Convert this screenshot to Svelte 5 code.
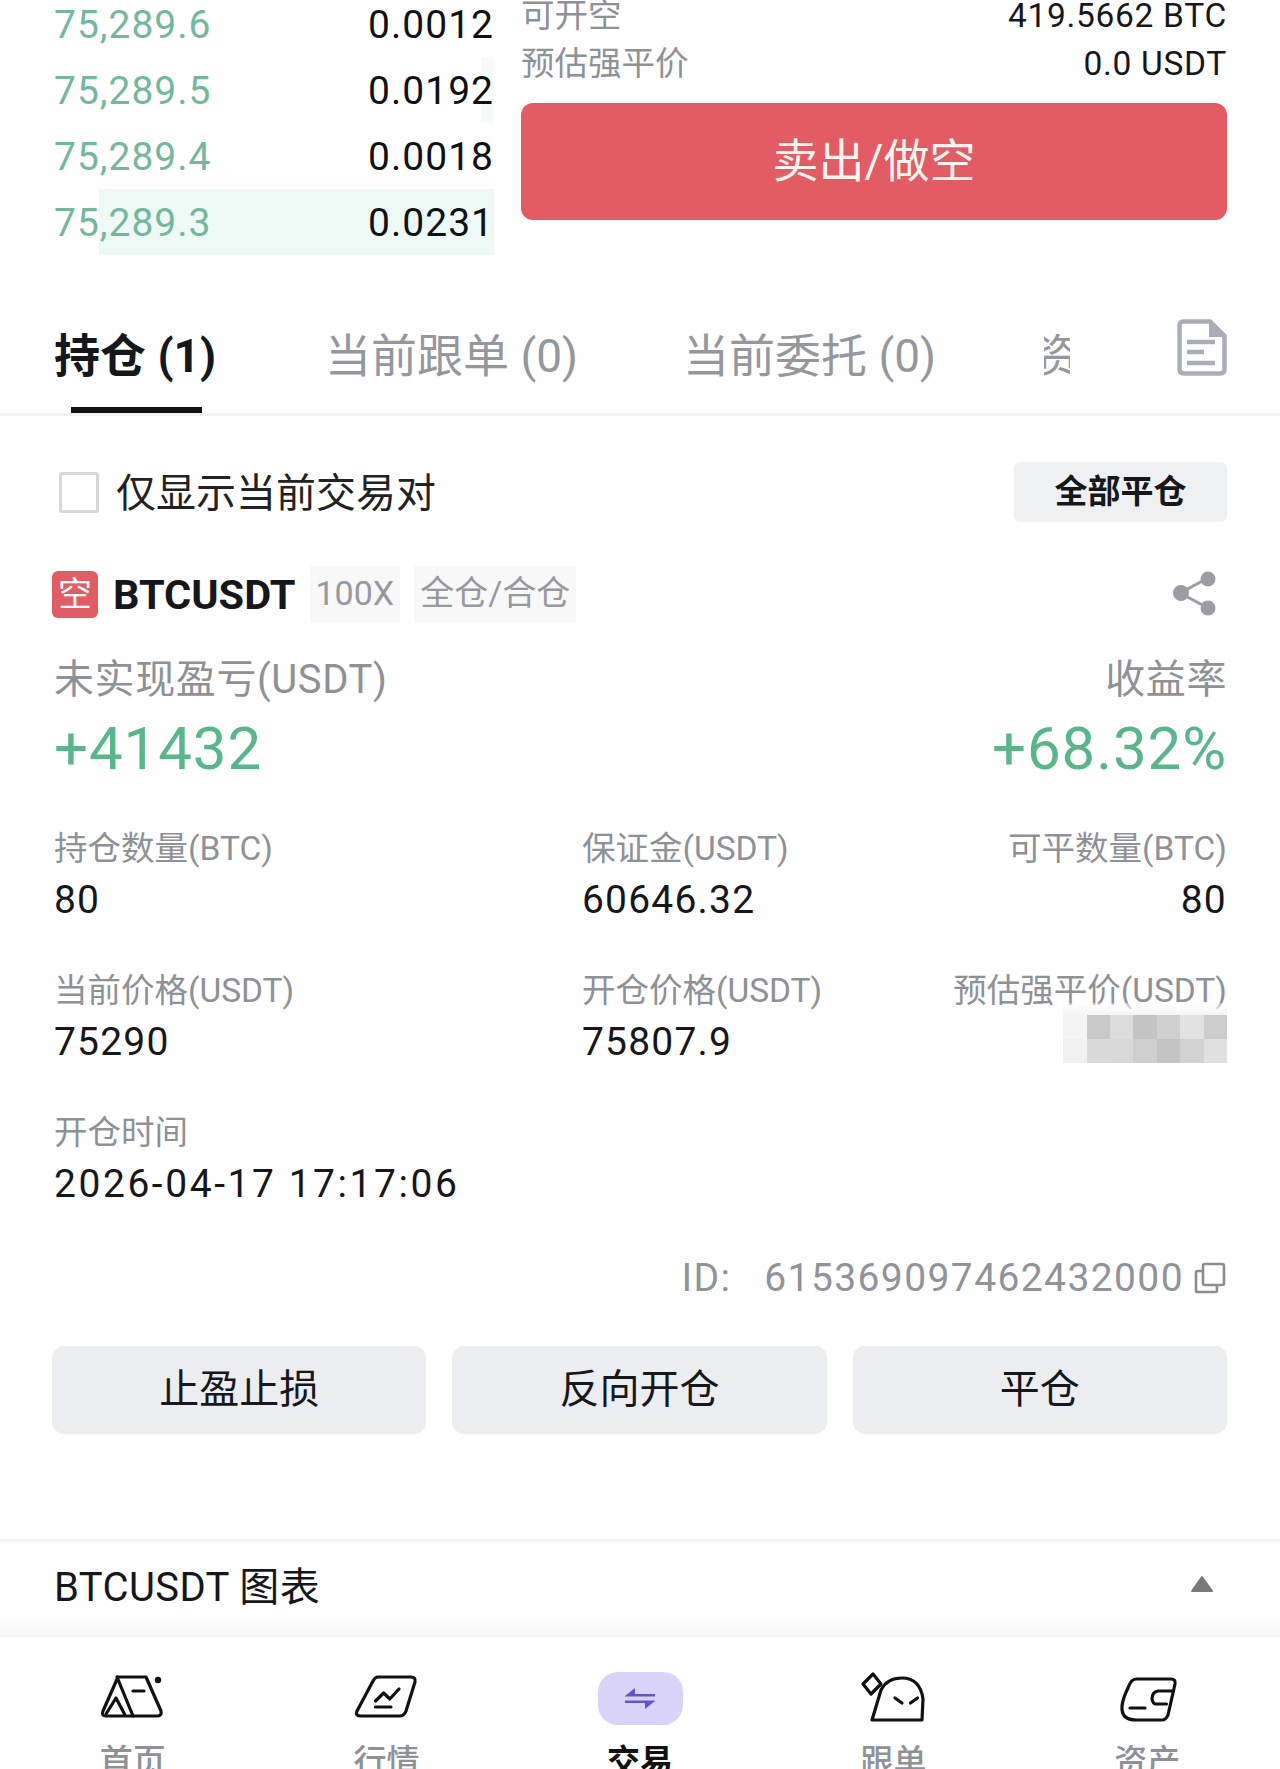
<script>
	const asks = [
		{ price: '75,289.6', qty: '0.0012', depth: 0 },
		{ price: '75,289.5', qty: '0.0192', depth: 3 },
		{ price: '75,289.4', qty: '0.0018', depth: 0 },
		{ price: '75,289.3', qty: '0.0231', depth: 89.8 }
	];

	const stats = [
		{ label: '持仓数量(BTC)', value: '80' },
		{ label: '保证金(USDT)', value: '60646.32' },
		{ label: '可平数量(BTC)', value: '80', right: true },
		{ label: '当前价格(USDT)', value: '75290' },
		{ label: '开仓价格(USDT)', value: '75807.9' },
		{ label: '预估强平价(USDT)', hidden: true, right: true },
		{ label: '开仓时间', value: '2026-04-17 17:17:06', wide: true }
	];

	// greys of the blurred-out value
	const mosaic = [
		'#f3f3f3', '#c9c9c9', '#dcdcdc', '#c4c4c4', '#cfcfcf', '#e2e2e2', '#cdcdcd',
		'#f0f0f0', '#dadada', '#d9d9d9', '#cfcfcf', '#c4c4c4', '#d2d2d2', '#e0e0e0'
	];
</script>

<div class="page">
	<section class="top">
		<div class="book">
			{#each asks as row}
				<div class="book-row">
					{#if row.depth}
						<span class="depth" class:faint={row.depth < 10} style="width: {row.depth}%"></span>
					{/if}
					<span class="price">{row.price}</span>
					<span class="qty">{row.qty}</span>
				</div>
			{/each}
		</div>
		<div class="order">
			<div class="info-row"><span class="info-label">可开空</span><span>419.5662 BTC</span></div>
			<div class="info-row"><span class="info-label">预估强平价</span><span>0.0 USDT</span></div>
			<button class="sell">卖出/做空</button>
		</div>
	</section>

	<nav class="tabs">
		<div class="tab active">持仓 (1)</div>
		<div class="tab follow">当前跟单 (0)</div>
		<div class="tab orders">当前委托 (0)</div>
		<div class="tab clipped">资</div>
		<svg class="doc" viewBox="0 0 50 57" width="50" height="57" fill="none">
			<path d="M6 2.5H33L47.5 17V50Q47.5 54.5 43 54.5H7Q2.5 54.5 2.5 50V7Q2.5 2.5 6 2.5Z" stroke="#a9aeb6" stroke-width="4.5" />
			<path d="M32 2L48 18H32Z" fill="#a9aeb6" />
			<path d="M10 23H38M10 33H27M10 44H38" stroke="#a9aeb6" stroke-width="4.5" />
		</svg>
	</nav>

	<section class="positions">
		<div class="filter">
			<label class="only-current"><span class="checkbox"></span><span class="only-text">仅显示当前交易对</span></label>
			<button class="close-all">全部平仓</button>
		</div>

		<div class="pos-head">
			<span class="side">空</span>
			<span class="symbol">BTCUSDT</span>
			<span class="tag lev">100X</span>
			<span class="tag mode">全仓/合仓</span>
			<svg class="share" viewBox="0 0 46 48" width="46" height="48" fill="#9a9da3">
				<path d="M8 23L36 8M8 23L36 38" stroke="#9a9da3" stroke-width="3" />
				<circle cx="9" cy="23" r="8" />
				<circle cx="36" cy="9" r="7.5" />
				<circle cx="36" cy="38" r="7.5" />
			</svg>
		</div>

		<div class="pnl">
			<div>
				<div class="pnl-label">未实现盈亏(USDT)</div>
				<div class="pnl-value">+41432</div>
			</div>
			<div class="right">
				<div class="pnl-label">收益率</div>
				<div class="pnl-value">+68.32%</div>
			</div>
		</div>

		<div class="stats">
			{#each stats as stat}
				<div class="stat" class:right={stat.right} class:wide={stat.wide}>
					<div class="stat-label">{stat.label}</div>
					{#if stat.hidden}
						<div class="mosaic">
							{#each mosaic as grey}
								<span style="background: {grey}"></span>
							{/each}
						</div>
					{:else}
						<div class="stat-value">{stat.value}</div>
					{/if}
				</div>
			{/each}
		</div>

		<div class="pos-id">
			<span class="id-key">ID:</span>
			<span>615369097462432000</span>
			<svg viewBox="0 0 32 32" width="32" height="32" fill="none" stroke="#8a8d92" stroke-width="2.6">
				<rect x="9" y="2" width="21" height="21" rx="2" />
				<path d="M9 9H3.5Q2 9 2 10.5V28.5Q2 30 3.5 30H21.5Q23 30 23 28.5V23" />
			</svg>
		</div>

		<div class="actions">
			<button>止盈止损</button>
			<button>反向开仓</button>
			<button>平仓</button>
		</div>
	</section>

	<div class="chart-row">
		<span>BTCUSDT 图表</span>
		<svg viewBox="0 0 24 18" width="24" height="18"><path d="M12 2L22 16H2Z" fill="#77797e" stroke="#77797e" stroke-width="2" stroke-linejoin="round" /></svg>
	</div>
	<div class="shade"></div>

	<footer class="tabbar">
		<div class="nav-item">
			<svg viewBox="-3 -4 72 56" width="72" height="56" fill="none" stroke="#111" stroke-width="3.2" stroke-linecap="round" stroke-linejoin="round">
				<path d="M18 4H46L61 38Q62 43 57 43H6Q1 43 3 38Z" />
				<path d="M17 4L33 43M6 41L16 25L24.5 41" />
				<path d="M33 18H44" />
				<circle cx="58" cy="7" r="1.6" fill="#111" />
			</svg>
			<span>首页</span>
		</div>
		<div class="nav-item">
			<svg viewBox="-4 -4 72 56" width="72" height="56" fill="none" stroke="#111" stroke-width="3.2" stroke-linecap="round" stroke-linejoin="round">
				<path d="M24 4H57Q62 4 61 9L52 38Q50 43 46 43H7Q1 43 3 38L19 8Q21 4 24 4Z" />
				<path d="M21.5 28L29.7 20L35.8 26L45 16M21.5 34H37" />
			</svg>
			<span>行情</span>
		</div>
		<div class="nav-item active">
			<div class="pill">
				<svg viewBox="0 0 30 21" width="30" height="21" fill="#6a4fd8">
					<path d="M0 8L10 0V6H30V8.5H0ZM30 13L20 21V15H0V12.5H30Z" />
				</svg>
			</div>
			<span>交易</span>
		</div>
		<div class="nav-item">
			<svg viewBox="0 0 72 56" width="72" height="56" fill="none" stroke="#111" stroke-width="3.2" stroke-linecap="round" stroke-linejoin="round">
				<path d="M14 51L23 21Q29 9 44 9Q62 9 65 30L64 51Z" />
				<path d="M5 15L15 5L23 15L13 25Z" />
				<path d="M37 29L44 34M59.5 29L52.5 34" />
			</svg>
			<span>跟单</span>
		</div>
		<div class="nav-item">
			<svg viewBox="-7 -4 72 56" width="72" height="56" fill="none" stroke="#111" stroke-width="3.2" stroke-linecap="round" stroke-linejoin="round">
				<path d="M18 6H53Q58 6 57 11L50 42Q48 47 44 47H18Q3 47 4 33Q5 25 10 15Q13 6 18 6Z" />
				<path d="M54.6 18H40Q34 19 34 26Q35 31 38 31H48.5" />
				<path d="M12 35H27" />
			</svg>
			<span>资产</span>
		</div>
	</footer>
</div>

<style>
	:global(body) {
		margin: 0;
		background: #fff;
	}
	.page {
		height: 1769px;
		overflow: hidden;
		font-family: Roboto, 'Noto Sans CJK SC', sans-serif;
		color: #16171a;
	}
	button {
		border: none;
		padding: 0;
		font-family: inherit;
		color: inherit;
	}

	.top {
		display: flex;
		gap: 27px;
		height: 263px;
		margin-top: -9px;
		padding: 0 53px 0 54px;
		box-sizing: border-box;
	}
	.book {
		width: 440px;
		flex-shrink: 0;
	}
	.book-row {
		position: relative;
		display: flex;
		align-items: center;
		justify-content: space-between;
		height: 66px;
		padding-top: 1px;
		box-sizing: border-box;
		font-size: 39px;
		letter-spacing: 1px;
	}
	.book-row span:not(.depth) {
		position: relative;
	}
	.depth {
		position: absolute;
		top: 0;
		right: 0;
		bottom: 0;
		background: #edf9f4;
	}
	.depth.faint {
		background: #f7fcfa;
	}
	.price {
		color: #72b89d;
	}
	.qty {
		color: #101114;
	}
	.order {
		flex: 1;
		min-width: 0;
	}
	.info-row {
		display: flex;
		justify-content: space-between;
		align-items: center;
		height: 48px;
		font-size: 33.5px;
		letter-spacing: 0.7px;
	}
	.info-label {
		margin-top: -5px;
		color: #8e9196;
		letter-spacing: 0;
	}
	.sell {
		display: block;
		width: 100%;
		height: 117px;
		margin-top: 16px;
		padding-bottom: 10px;
		border-radius: 12px;
		background: #e35b63;
		color: #fff6f0;
		font-size: 46px;
	}

	.tabs {
		display: flex;
		align-items: flex-start;
		height: 162px;
		padding: 72px 53px 0 54px;
		box-sizing: border-box;
		border-bottom: 3px solid #f1f2f3;
	}
	.tab {
		position: relative;
		height: 60px;
		line-height: 60px;
		font-size: 46px;
		color: #94979c;
		white-space: nowrap;
	}
	.tab.active {
		color: #16171a;
		font-weight: 700;
	}
	.tab.active::after {
		content: '';
		position: absolute;
		left: 17px;
		width: 131px;
		top: 81px;
		height: 6px;
		background: #111;
	}
	.tab.follow {
		margin-left: 109px;
	}
	.tab.orders {
		margin-left: 105px;
	}
	.tab.clipped {
		width: 26px;
		margin-left: 108px;
		overflow: hidden;
		text-indent: -10px;
	}
	.doc {
		margin-top: -7px;
		margin-left: auto;
	}

	.positions {
		padding: 46px 53px 0 54px;
	}
	.filter {
		display: flex;
		align-items: center;
		justify-content: space-between;
		height: 60px;
	}
	.only-current {
		display: flex;
		align-items: center;
		gap: 17px;
		font-size: 40px;
		color: #222;
	}
	.only-text {
		margin-top: -5px;
	}
	.checkbox {
		width: 40px;
		height: 41px;
		margin-left: 5px;
		box-sizing: border-box;
		border: 3px solid #d6d7d9;
		border-radius: 3px;
	}
	.close-all {
		width: 213px;
		height: 60px;
		padding-bottom: 7px;
		border-radius: 6px;
		background: #eff0f2;
		font-size: 33px;
		font-weight: 700;
	}
	.pos-head {
		display: flex;
		align-items: center;
		height: 56px;
		margin: 44px 0 0 -2px;
	}
	.side {
		width: 46px;
		height: 47px;
		line-height: 47px;
		border-radius: 6px;
		background: #e35b63;
		color: #fff;
		font-size: 34px;
		text-align: center;
	}
	.symbol {
		margin-left: 15px;
		font-size: 41.5px;
		font-weight: 700;
	}
	.tag {
		height: 56px;
		line-height: 54px;
		padding: 0 6px;
		background: #f8f8f9;
		color: #96999e;
		font-size: 34px;
	}
	.lev {
		margin-left: 14px;
	}
	.mode {
		margin-left: 14px;
	}
	.share {
		margin-left: auto;
		margin-right: 9px;
	}

	.pnl {
		display: flex;
		justify-content: space-between;
		margin-top: 33px;
	}
	.right {
		text-align: right;
	}
	.pnl-label {
		height: 50px;
		line-height: 50px;
		font-size: 40px;
		letter-spacing: 0.6px;
		color: #8e9196;
	}
	.pnl-value {
		height: 80px;
		margin-top: 4px;
		line-height: 80px;
		font-size: 60px;
		letter-spacing: 0.9px;
		color: #57b78b;
	}

	.stats {
		display: grid;
		grid-template-columns: 528px 1fr auto;
		row-gap: 44px;
		margin-top: 38px;
	}
	.stat-label {
		height: 44px;
		line-height: 44px;
		font-size: 33.5px;
		color: #8e9196;
		white-space: nowrap;
	}
	.stat-value {
		height: 50px;
		margin-top: 4px;
		line-height: 50px;
		font-size: 39px;
		letter-spacing: 1.2px;
		white-space: nowrap;
	}
	.stat.wide .stat-value {
		letter-spacing: 2.55px;
	}
	.stat.wide {
		grid-column: 1 / -1;
	}
	.mosaic {
		position: relative;
		display: grid;
		grid-template-columns: repeat(7, 23.4px);
		grid-auto-rows: 24px;
		justify-content: end;
		margin-top: 2px;
	}
	.mosaic::before {
		content: '';
		position: absolute;
		top: -12px;
		right: 0;
		width: 164px;
		height: 12px;
		background: linear-gradient(rgba(255, 255, 255, 0.4), #f4f4f4);
	}

	.pos-id {
		display: flex;
		align-items: center;
		justify-content: flex-end;
		height: 50px;
		margin-top: 44px;
		font-size: 39px;
		letter-spacing: 1.4px;
		color: #90939a;
	}
	.id-key {
		margin-right: 33px;
	}
	.pos-id svg {
		margin: 0 1px 0 10px;
	}

	.actions {
		display: grid;
		grid-template-columns: repeat(3, 1fr);
		gap: 26px;
		margin: 43px 0 0 -2px;
	}
	.actions button {
		height: 88px;
		padding-bottom: 8px;
		border-radius: 12px;
		background: #ecedf0;
		font-size: 40px;
	}

	.chart-row {
		display: flex;
		align-items: center;
		justify-content: space-between;
		height: 60px;
		margin-top: 105px;
		padding: 12px 66px 5px 54px;
		border-top: 3px solid #f2f3f4;
		font-size: 40px;
		letter-spacing: 0.4px;
	}
	.shade {
		height: 18px;
		background: linear-gradient(#fdfdfd, #f5f5f6);
	}
	.tabbar {
		display: grid;
		grid-template-columns: repeat(5, 1fr);
		height: 133px;
		padding: 32px 6px 0;
		box-sizing: border-box;
		font-size: 33px;
		font-weight: 500;
		color: #8e9196;
	}
	.nav-item {
		display: flex;
		flex-direction: column;
		align-items: center;
		gap: 17px;
		line-height: 40px;
	}
	.nav-item svg {
		display: block;
	}
	.nav-item.active {
		color: #111;
		font-weight: 700;
	}
	.pill {
		display: flex;
		align-items: center;
		justify-content: center;
		width: 85px;
		height: 53px;
		margin: 3px 0 0 1px;
		border-radius: 20px;
		background: #d9d3f9;
	}
</style>
